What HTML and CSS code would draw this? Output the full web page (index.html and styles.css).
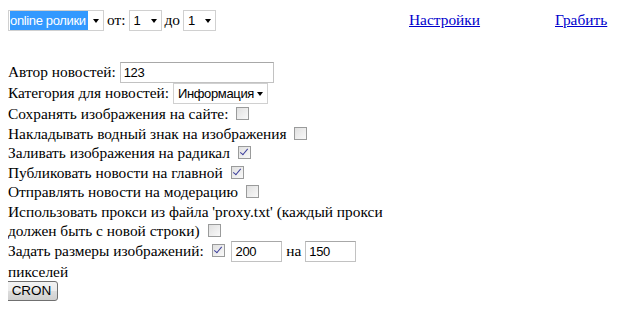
FILE: index.html
```html
<!DOCTYPE html>
<html lang="ru">
<head>
    <meta charset="UTF-8">
    <title>Граббер новостей</title>
    <link rel="stylesheet" href="styles.css">
</head>
<body>
    <div class="top-bar">
        <div class="top-filters">
            <span class="sel sel-source"><select class="sel-hl"><option>online ролики</option></select></span>
            от:
            <span class="sel sel-num"><select><option>1</option></select></span>
            до
            <span class="sel sel-num"><select><option>1</option></select></span>
        </div>
        <a href="#" class="top-link">Настройки</a>
        <a href="#" class="top-link">Грабить</a>
    </div>

    <form class="settings">
        <div class="row">Автор новостей: <input type="text" class="field field-wide" value="123"></div>
        <div class="row">Категория для новостей:
            <span class="sel sel-cat"><select><option>Информация</option></select></span>
        </div>
        <div class="row">Сохранять изображения на сайте: <input type="checkbox" class="check"></div>
        <div class="row">Накладывать водный знак на изображения <input type="checkbox" class="check"></div>
        <div class="row">Заливать изображения на радикал <input type="checkbox" class="check" checked></div>
        <div class="row">Публиковать новости на главной <input type="checkbox" class="check" checked></div>
        <div class="row">Отправлять новости на модерацию <input type="checkbox" class="check"></div>
        <div class="row">Использовать прокси из файла 'proxy.txt' (каждый прокси должен быть с новой строки) <input type="checkbox" class="check"></div>
        <div class="row">Задать размеры изображений: <input type="checkbox" class="check" checked>
            <input type="text" class="field field-small" value="200"> на
            <input type="text" class="field field-small" value="150"> пикселей</div>
        <div class="row row-button"><button type="button" class="cron-button">CRON</button></div>
    </form>
</body>
</html>
```

FILE: styles.css
```css
body {
    margin: 8px;
    background: #ffffff;
    color: #000000;
    font-family: 'Liberation Serif', 'Times New Roman', serif;
    font-size: 15.4px;
}

/* top row: filters + links */
.top-bar {
    display: grid;
    grid-template-columns: 401px 146px auto;
    align-items: center;
    height: 24px;
}

.top-filters {
    display: flex;
    align-items: center;
    gap: 3px;
}

.top-link {
    color: #0000cc;
}

/* select look */
.sel {
    position: relative;
    display: inline-block;
    line-height: 0;
}

.sel select {
    appearance: none;
    -webkit-appearance: none;
    border: 1px solid #d0d0d0;
    background: #ffffff;
    font-family: 'Liberation Sans', Arial, sans-serif;
    font-size: 13px;
    letter-spacing: -0.35px;
    height: 21px;
    padding: 0 12px 0 2px;
    margin: 0;
    color: #000000;
    border-radius: 0;
}

.sel::after {
    content: "";
    position: absolute;
    right: 5px;
    top: 9px;
    border-left: 3.5px solid transparent;
    border-right: 3.5px solid transparent;
    border-top: 4px solid #000000;
}

.sel-source select {
    width: 96px;
    padding-left: 1px;
    color: #ffffff;
    background: linear-gradient(to right, #ffffff 0 1px, #3399ff 1px 79px, #ffffff 79px);
}

.sel-num select {
    width: 33px;
    padding-left: 4px;
}

.sel-cat select {
    width: 95px;
    padding-left: 4px;
}

/* form rows */
.settings {
    width: 382px;
    margin-top: 30px;
}

.row {
    line-height: 19.5px;
}

.field {
    font-family: 'Liberation Sans', Arial, sans-serif;
    font-size: 13px;
    letter-spacing: -0.3px;
    border: 1px solid #c2c2c2;
    border-top-color: #a8a8a8;
    height: 21px;
    box-sizing: border-box;
    padding: 0 3px;
    margin: 0;
    vertical-align: baseline;
}

.field-wide {
    width: 154px;
}

.field-small {
    width: 51px;
}

.check {
    appearance: none;
    -webkit-appearance: none;
    position: relative;
    width: 13px;
    height: 13px;
    margin: 0 3px 0 4px;
    border: 1px solid #9a9b9b;
    background: linear-gradient(135deg, #e0e0e0, #f9f9f9);
    vertical-align: -1px;
    box-sizing: border-box;
}

.check:checked::after {
    content: "";
    position: absolute;
    left: 3px;
    top: 0;
    width: 3px;
    height: 7px;
    border-right: 1.5px solid #3d3f9c;
    border-bottom: 1.5px solid #3d3f9c;
    transform: rotate(40deg);
}

.row-button {
    margin-top: -1px;
}

.cron-button {
    font-family: 'Liberation Sans', Arial, sans-serif;
    font-size: 13.5px;
    width: 53px;
    height: 20px;
    margin-left: -3px;
    padding: 0;
    border: 1px solid #707070;
    border-radius: 3px;
    background: linear-gradient(#f2f2f2 0%, #ebebeb 50%, #dddddd 51%, #cfcfcf 100%);
    color: #000000;
}
```
